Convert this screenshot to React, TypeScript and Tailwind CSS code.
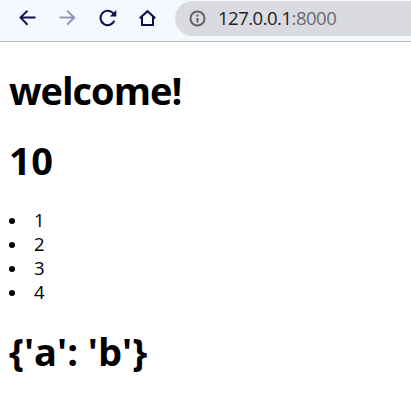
const headings = "font-bold text-[38px] leading-[50px] whitespace-pre";

function Toolbar() {
  return (
    <header className="flex h-[42px] items-start border-b border-[#b9bbc4] bg-[#f5f8fe]">
      <div className="flex gap-4 pl-[15px] pt-[6px] text-[#150b4d]">
        <svg className="size-6" viewBox="0 0 24 24" fill="currentColor">
          <path d="M20.5 10.5H7.83l5.3-5.1L11.8 4l-7.6 7.5 7.6 7.9 1.4-1.41L7.83 12.5H20.5z" />
        </svg>
        <svg className="size-6 text-[#9a95b8]" viewBox="0 0 24 24" fill="currentColor">
          <path d="M12.7 4l-1.35 1.41 5.32 5.09H4.5v2h12.17l-5.3 5.49 1.33 1.41 8-7.9z" />
        </svg>
        <svg className="size-6" viewBox="0 0 24 24" fill="none" stroke="currentColor" strokeWidth="2">
          <path d="M19.4 14.6A7.2 7.2 0 1 1 18.1 7.2L19.5 8.6" />
          <path d="M21.3 4v6.5h-6.5z" fill="currentColor" stroke="none" />
        </svg>
        <svg className="size-6" viewBox="0 0 24 24" fill="none" stroke="currentColor" strokeWidth="2">
          <path d="M4.8 12.3L12.5 5.2l7.7 7.1M7 11v8h11v-8" />
        </svg>
      </div>
      <div className="ml-[16px] mt-px flex h-[35px] flex-1 items-center rounded-l-full bg-[#dadbe0] pl-[14px]">
        <svg className="size-[18px]" viewBox="0 0 18 18" fill="none" stroke="#5f6368" strokeWidth="2">
          <circle cx="8.5" cy="8.5" r="7" />
          <path d="M8.5 8v4.5M8.5 4.6v2" />
        </svg>
        <span className="mb-[2px] ml-[11px] text-[18.5px] leading-6 tracking-[-0.5px] text-[#202124]">
          127.0.0.1<span className="text-[#686a70]">:8000</span>
        </span>
      </div>
    </header>
  );
}

export default function App() {
  return (
    <div className="h-[407px] overflow-hidden bg-white font-['Open_Sans','Noto_Sans',sans-serif] text-black">
      <Toolbar />
      <main className="pl-[9px]">
        <h1 className={`${headings} pt-[23px] tracking-[-1px]`}>welcome!</h1>
        <h1 className={`${headings} mt-[20px] tracking-[0.5px]`}>10</h1>
        <ul className="mt-[23px] text-[18.5px] leading-6">
          {[1, 2, 3, 4].map((n) => (
            <li key={n} className="flex items-center">
              <span className="mt-px size-[6px] rounded-full bg-black" />
              <span className="ml-[19px]">{n}</span>
            </li>
          ))}
        </ul>
        <h1 className={`${headings} mt-[22px]`}>{"{'a': 'b'}"}</h1>
      </main>
    </div>
  );
}
